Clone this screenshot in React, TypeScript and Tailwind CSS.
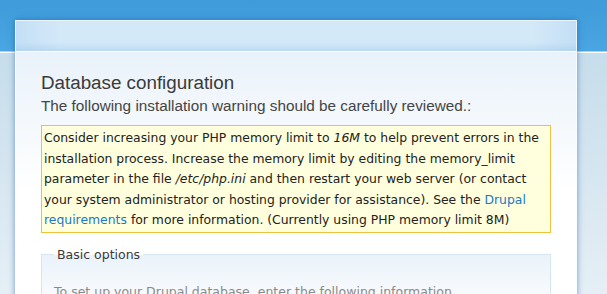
const App = () => {
  return (
    <div className="h-[294px] w-[607px] overflow-hidden bg-[linear-gradient(to_bottom,#3f9bd9_0px,#4aa6e2_51px,#ffffff_52px,#ffffff_53px,#c6ddeb_53px,#e6eff6_294px)] pt-[20px] pl-[15px]">
      <div className="w-[562px] border border-white/90 shadow-[0_0_6px_rgba(20,80,170,0.55)] font-['Liberation_Sans',Arial,sans-serif]">
        <div className="h-[31px] border-b border-white bg-[linear-gradient(to_bottom,rgba(255,255,255,0)_70%,rgba(160,200,235,0.45)),linear-gradient(to_right,#c3dff5,#d4e9f8_8%,#d4e9f8_92%,#c3dff5)]" />
        <div className="h-[300px] bg-[linear-gradient(to_bottom,#e9f2fa,#ffffff_140px)] pl-[25px] pt-[20px]">
          <h2 className="text-[18.8px] leading-[22px] text-[#3a3a3a]">Database configuration</h2>
          <p className="mt-[2px] text-[15.3px] leading-[20px] text-[#444]">
            The following installation warning should be carefully reviewed.:
          </p>
          <div className="mt-[9px] w-[510px] border border-[#f0c040] bg-[#ffffdd] px-[2px] pt-[2px] pb-[1px] font-['DejaVu_Sans',Verdana,sans-serif] text-[12.4px] leading-[20.6px] text-[#222]">
            Consider increasing your PHP memory limit to <em>16M</em> to help prevent errors in the
            installation process. Increase the memory limit by editing the memory_limit parameter in
            the file <em>/etc/php.ini</em> and then restart your web server (or contact your system
            administrator or hosting provider for assistance). See the{" "}
            <a href="#" className="text-[#1a78c8]">
              Drupal requirements
            </a>{" "}
            for more information. (Currently using PHP memory limit 8M)
          </div>
          <fieldset className="mt-[13px] w-[510px] border border-[#d6e5f2] bg-[linear-gradient(to_bottom,#eaf2fa,#ffffff_60px)] px-[12px] font-['DejaVu_Sans',Verdana,sans-serif]">
            <legend className="px-[3px] text-[12.5px] leading-[18px] text-[#3a3a3a]">Basic options</legend>
            <p className="mt-[18px] text-[12.5px] leading-[20px] text-[#8a8a8a]">
              To set up your Drupal database, enter the following information.
            </p>
          </fieldset>
        </div>
      </div>
    </div>
  )
}

export default App
